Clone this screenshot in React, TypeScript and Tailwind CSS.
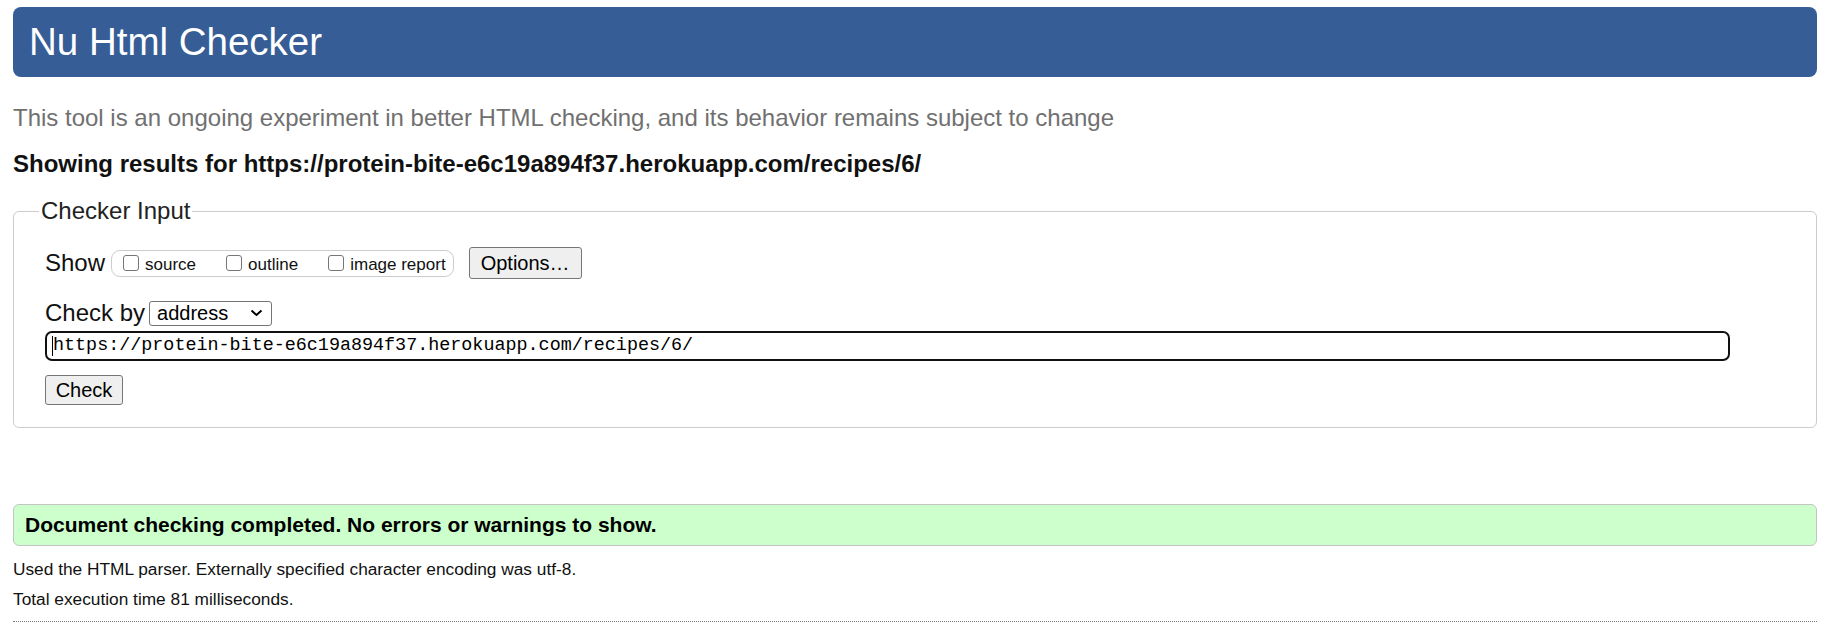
import React from "react";

const Checkbox = () => (
  <span className="inline-block w-[16px] h-[16px] border border-[#767676] rounded-[3px] bg-white" />
);

const Option = ({ label }: { label: string }) => (
  <span className="flex items-center">
    <Checkbox />
    <span className="ml-[6px] text-[17px] leading-[20px] mt-[4px]">{label}</span>
  </span>
);

export default function App() {
  return (
    <div className="min-h-screen bg-white text-[#111] font-['Liberation_Sans',Arial,sans-serif] pl-[13px] pr-[20px] pt-[7px]">
      <h1 className="h-[70px] flex items-center pl-[16px] rounded-[8px] bg-[#365d95] text-white text-[38.5px] leading-none">
        Nu Html Checker
      </h1>

      <p className="mt-[27px] text-[24px] leading-[28px] text-[#707070]">
        This tool is an ongoing experiment in better HTML checking, and its behavior remains subject to change
      </p>

      <p className="mt-[18px] text-[24px] leading-[28px] font-bold text-[#111]">
        Showing results for https://protein-bite-e6c19a894f37.herokuapp.com/recipes/6/
      </p>

      <fieldset className="mt-[19px] border border-[#cccccc] rounded-[6px]">
        <legend className="ml-[25px] px-[2px] text-[24px] leading-[28px] text-[#222]">Checker Input</legend>

        <div className="pl-[31px] pb-[22px]">
          <div className="flex items-center mt-[22px]">
            <span className="text-[24px] leading-[28px]">Show</span>
            <div className="ml-[6px] h-[27px] flex items-center gap-[30px] border border-[#cccccc] rounded-[9px] pl-[11px] pr-[7px]">
              <Option label="source" />
              <Option label="outline" />
              <Option label="image report" />
            </div>
            <button className="ml-[15px] w-[113px] h-[32px] bg-[#efefef] border border-[#767676] rounded-[3px] text-[20px] leading-none text-black">
              Options…
            </button>
          </div>

          <div className="flex items-center mt-[20px]">
            <span className="text-[24px] leading-[28px]">Check by</span>
            <div className="ml-[4px] w-[123px] h-[25px] flex items-center justify-between border border-[#767676] rounded-[3px] pl-[7px] pr-[8px] text-[20px] leading-none text-black">
              <span>address</span>
              <svg width="13" height="8" viewBox="0 0 13 8" fill="none" stroke="black" strokeWidth="2">
                <path d="M1.5 1.5 L6.5 6 L11.5 1.5" />
              </svg>
            </div>
          </div>

          <div className="mt-[4px] w-[1685px] h-[30px] flex items-center border-2 border-[#101010] rounded-[7px] pl-[5px] font-['Liberation_Mono','Courier_New',monospace] text-[18.4px] leading-none text-black">
            <span className="w-[1px] h-[20px] bg-black" />
            <span>https://protein-bite-e6c19a894f37.herokuapp.com/recipes/6/</span>
          </div>

          <button className="mt-[14px] block w-[78px] h-[30px] bg-[#efefef] border border-[#767676] rounded-[3px] text-[20px] leading-none text-black">
            Check
          </button>
        </div>
      </fieldset>

      <div className="mt-[76px] h-[42px] flex items-center pl-[11px] bg-[#ccffcc] border border-[#c4c4c4] rounded-[6px] text-[21px] font-bold text-black">
        Document checking completed. No errors or warnings to show.
      </div>

      <p className="mt-[13px] text-[17.3px] leading-[20px] text-[#111]">
        Used the HTML parser. Externally specified character encoding was utf-8.
      </p>
      <p className="mt-[10px] text-[17.3px] leading-[20px] text-[#111]">
        Total execution time 81 milliseconds.
      </p>
      <div className="mt-[12px] border-b border-dotted border-[#777]" />
    </div>
  );
}
